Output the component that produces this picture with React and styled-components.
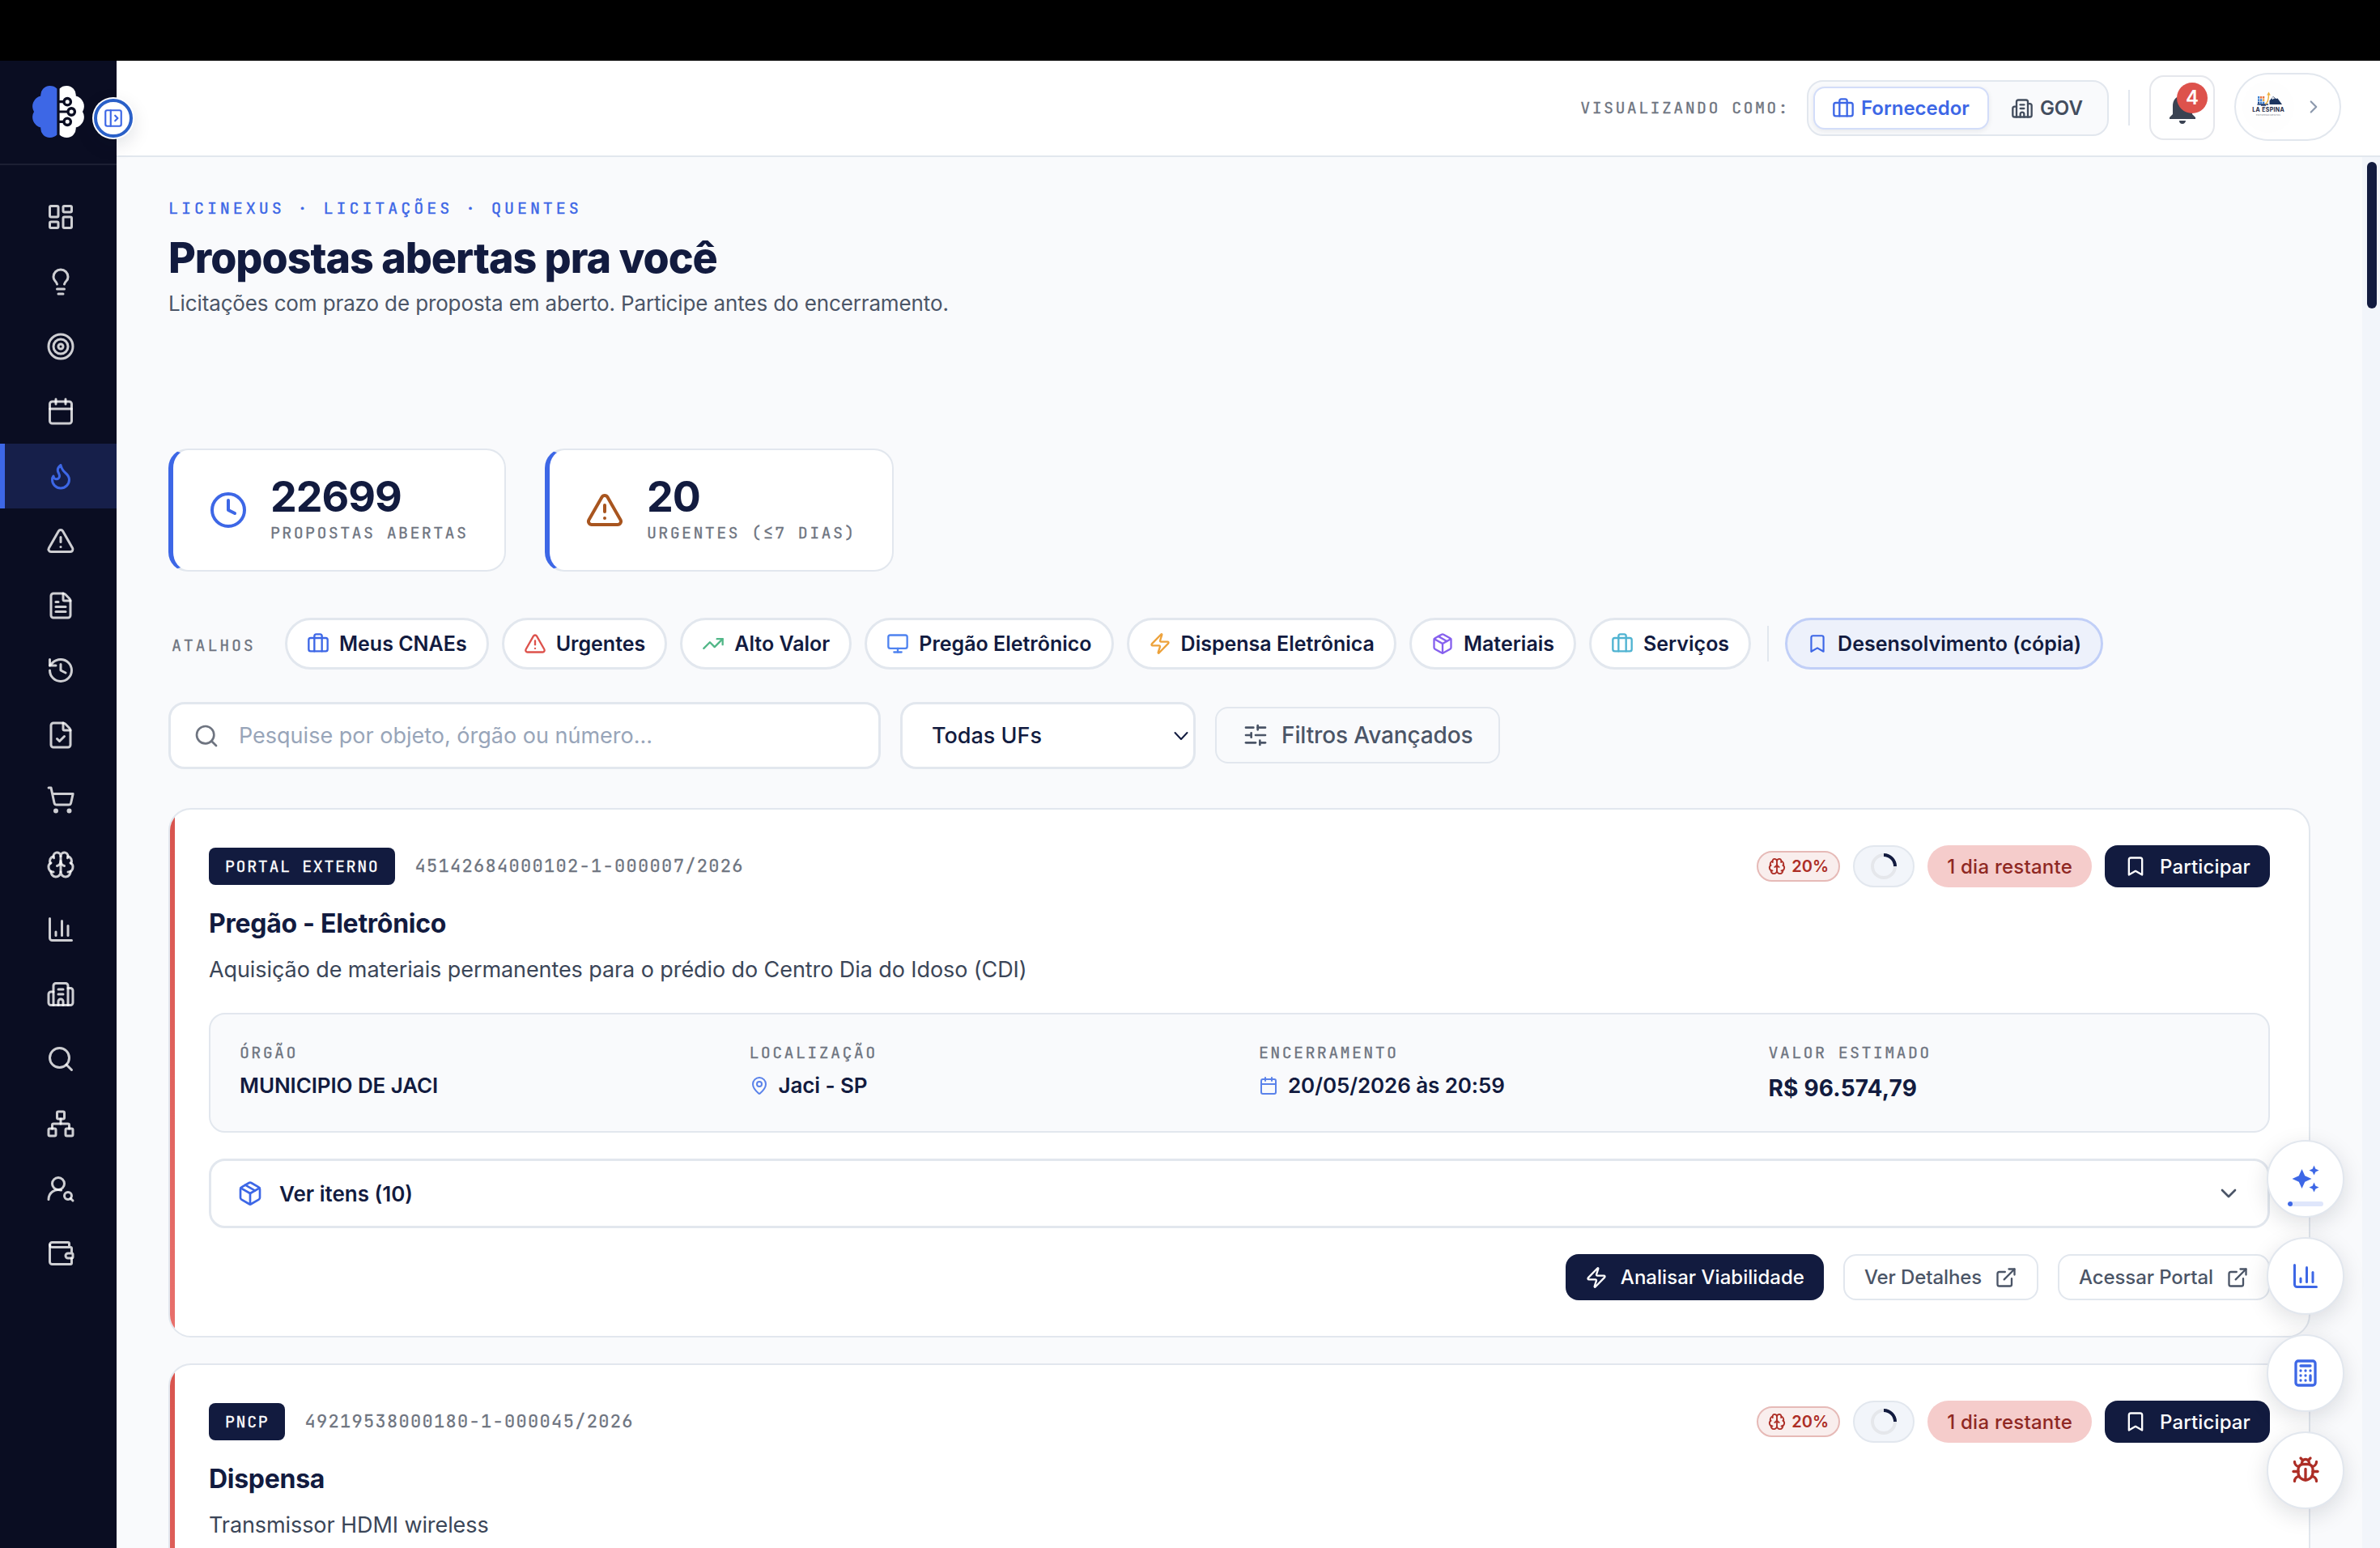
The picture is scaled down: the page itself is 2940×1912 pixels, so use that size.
import React from "react";
import styled, { createGlobalStyle, css } from "styled-components";
import {
  LayoutDashboard, Lightbulb, Target, Calendar, Flame, TriangleAlert, FileText, History, FileCheck,
  ShoppingCart, Brain, ChartColumn, Building2, Search, Network, UserRoundSearch, Wallet, PanelLeftOpen,
  Briefcase, ChevronRight, ChevronDown, Clock, TrendingUp, Monitor, Zap, Package, Bookmark,
  SlidersHorizontal, MapPin, ExternalLink, Calculator, Bug,
} from "lucide-react";
import { MdNotifications, MdAutoAwesome } from "react-icons/md";

const c = {
  night: "#0a0d22",
  navy: "#121b3f",
  blue: "#3d67e6",
  page: "#f9fafc",
  line: "#e2e7ee",
  gray: "#6e7480",
  slate: "#4b5567",
  red: "#dd524c",
  redDark: "#ad2e26",
};

const sans = `Inter, "Open Sans", sans-serif`;
const mono = `"JetBrains Mono", "DejaVu Sans Mono", monospace`;

const GlobalStyle = createGlobalStyle`
  * { box-sizing: border-box; }
  body { margin: 0; background: #000; overflow: hidden; }
  svg { display: block; flex: none; }
  button, input, select { font: inherit; margin: 0; }
  h1, h2, p { margin: 0; }
`;

const Screen = styled.div`
  width: 2940px;
  height: 1912px;
  padding-top: 75px;
  background: #000;
  display: flex;
  overflow: hidden;
  font-family: ${sans};
  color: ${c.navy};
  position: relative;
`;

/* Sidebar */
const Sidebar = styled.aside`
  width: 144px;
  flex: none;
  background: ${c.night};
  position: relative;
  z-index: 2;
`;
const Brand = styled.div`
  height: 129px;
  padding: 31px 0 0 40px;
  border-bottom: 2px solid #1c1f33;
`;
const Toggle = styled.button`
  position: absolute;
  left: 116px;
  top: 47px;
  width: 48px;
  height: 48px;
  padding: 0;
  border-radius: 50%;
  border: 4px solid #2a60c8;
  background: #fff;
  color: ${c.blue};
  box-shadow: 0 0 0 2px #fff, 0 8px 24px rgba(15, 23, 42, 0.14);
  display: flex;
  align-items: center;
  justify-content: center;
`;
const Nav = styled.nav`
  display: flex;
  flex-direction: column;
  padding-top: 24px;
`;
const NavItem = styled.a`
  height: 80px;
  display: flex;
  align-items: center;
  justify-content: center;
  border-left: 6px solid ${(p) => (p.$active ? c.blue : "transparent")};
  background: ${(p) => (p.$active ? "#161f4a" : "transparent")};
  color: ${(p) => (p.$active ? c.blue : "rgba(255,255,255,0.8)")};
`;

/* Right-hand column */
const Column = styled.div`
  flex: 1;
  min-width: 0;
  display: flex;
  flex-direction: column;
  background: ${c.page};
`;
const Header = styled.header`
  height: 119px;
  flex: none;
  background: #fff;
  border-bottom: 2px solid ${c.line};
  display: flex;
  align-items: center;
  justify-content: flex-end;
  padding: 0 48px 1px 0;
`;
const MonoLabel = styled.span`
  font-family: ${mono};
  font-size: 20px;
  line-height: 28px;
  letter-spacing: ${(p) => p.$track || "2.37px"};
  color: ${c.gray};
  -webkit-text-stroke: 0.3px;
  white-space: nowrap;
`;
const Segment = styled.div`
  display: flex;
  gap: 4px;
  width: 373px;
  height: 69px;
  margin: 1px 0 0 21px;
  padding: 6px;
  border: 2px solid ${c.line};
  border-radius: 20px;
  background: ${c.page};
`;
const SegmentButton = styled.button`
  height: 53px;
  display: flex;
  align-items: center;
  gap: 8px;
  padding: 0 22px 0 21px;
  border-radius: 14px;
  border: 2px solid ${(p) => (p.$active ? "#d3ddf9" : "transparent")};
  background: ${(p) => (p.$active ? "#fff" : "transparent")};
  box-shadow: ${(p) => (p.$active ? "0 2px 6px rgba(15,23,42,0.08)" : "none")};
  color: ${(p) => (p.$active ? c.blue : "#434d5e")};
  font-size: 24px;
  font-weight: 600;
`;
const Rule = styled.i`
  width: 2px;
  height: 44px;
  flex: none;
  background: ${c.line};
`;
const HeaderRule = styled(Rule)`
  margin-left: 24px;
`;
const BellButton = styled.button`
  position: relative;
  width: 81px;
  height: 80px;
  margin-left: 24px;
  padding: 0;
  border: 2px solid #e5e7ec;
  border-radius: 18px;
  background: #fff;
  color: #3a4252;
  display: flex;
  align-items: center;
  justify-content: center;
`;
const Count = styled.span`
  position: absolute;
  left: 32px;
  top: 7px;
  width: 38px;
  height: 38px;
  border-radius: 50%;
  background: ${c.red};
  color: #fff;
  font-size: 24px;
  font-weight: 600;
  line-height: 38px;
  text-align: center;
`;
const Profile = styled.button`
  width: 132px;
  height: 84px;
  margin: 0 0 2px 24px;
  padding: 0 19px 0 8px;
  border: 2px solid ${c.line};
  border-radius: 42px;
  background: #fff;
  color: #8c99ad;
  display: flex;
  align-items: center;
  justify-content: space-between;
`;
const Avatar = styled.span`
  width: 64px;
  height: 64px;
  border-radius: 50%;
  overflow: hidden;
  background: #fefefe;
`;

const Body = styled.div`
  flex: 1;
  min-height: 0;
  display: flex;
`;
const Main = styled.main`
  flex: 1;
  min-width: 0;
  padding: 47px 64px 0;
  overflow: hidden;
`;
const Track = styled.div`
  width: 22px;
  flex: none;
  padding: 6px 4px 0 6px;
  background: #f2f5fa;
`;
const Thumb = styled.div`
  height: 181px;
  border-radius: 6px;
  background: ${c.navy};
`;

const Eyebrow = styled.p`
  font-family: ${mono};
  font-size: 20px;
  line-height: 32px;
  letter-spacing: 3.96px;
  color: ${c.blue};
  -webkit-text-stroke: 0.4px;
`;
const Title = styled.h1`
  margin-top: 16px;
  font-size: 52px;
  line-height: 60px;
  font-weight: 800;
  letter-spacing: -1.04px;
`;
const Subtitle = styled.p`
  margin-top: 6px;
  font-size: 26px;
  line-height: 40px;
  letter-spacing: -0.125px;
  color: ${c.slate};
`;

const Stats = styled.div`
  display: flex;
  gap: 48px;
  margin-top: 159px;
`;
const Stat = styled.div`
  height: 152px;
  width: ${(p) => p.$width}px;
  display: flex;
  align-items: center;
  gap: 28px;
  padding-left: 44px;
  border: 2px solid ${c.line};
  border-left: 6px solid ${c.blue};
  border-radius: 24px;
  background: #fff;
  color: ${(p) => p.$tone};
`;
const StatText = styled.div`
  display: flex;
  flex-direction: column;
  gap: 4px;
`;
const StatValue = styled.strong`
  font-size: 52px;
  line-height: 52px;
  font-weight: 700;
  letter-spacing: -1.04px;
  color: ${c.navy};
`;

const Shortcuts = styled.div`
  display: flex;
  align-items: center;
  gap: 16px;
  margin-top: 57px;
`;
const ShortcutsLabel = styled(MonoLabel)`
  width: 128px;
  padding: 4px 0 0 4px;
`;
const Chip = styled.button`
  height: 64px;
  display: flex;
  align-items: center;
  gap: 12px;
  padding: 0 24px;
  border: 3px solid ${(p) => (p.$active ? "#c1cff7" : c.line)};
  border-radius: 32px;
  background: ${(p) => (p.$active ? "#edf1fb" : "#fff")};
  color: ${c.navy};
  font-size: 25px;
  font-weight: 600;
  white-space: nowrap;
`;
const ChipRule = styled(Rule)`
  margin: 0 4px;
`;

const Filters = styled.div`
  display: flex;
  align-items: center;
  gap: 24px;
  margin-top: 40px;
`;
const SearchBox = styled.label`
  width: 880px;
  height: 83px;
  display: flex;
  align-items: center;
  gap: 24px;
  padding: 0 28px;
  border: 3px solid ${c.line};
  border-radius: 20px;
  background: #fff;
  color: ${c.gray};
`;
const SearchInput = styled.input`
  flex: 1;
  border: 0;
  padding: 0;
  outline: 0;
  background: none;
  font-size: 27px;
  &::placeholder { color: #98a5b9; opacity: 1; }
`;
const UfSelect = styled.button`
  width: 365px;
  height: 83px;
  display: flex;
  align-items: center;
  justify-content: space-between;
  padding: 0 6px 0 36px;
  border: 3px solid ${c.line};
  border-radius: 20px;
  background: #fff;
  color: ${c.navy};
  font-size: 27px;
  font-weight: 500;
`;
const AdvancedButton = styled.button`
  height: 70px;
  margin-bottom: 1px;
  display: flex;
  align-items: center;
  gap: 16px;
  padding: 0 31px 0 32px;
  border: 2px solid ${c.line};
  border-radius: 16px;
  background: ${c.page};
  color: ${c.slate};
  font-size: 28px;
  font-weight: 500;
  letter-spacing: -0.12px;
`;

/* Tender cards */
const CardList = styled.div`
  display: flex;
  flex-direction: column;
  gap: 32px;
  margin-top: 48px;
`;
const Card = styled.article`
  position: relative;
  height: 654px;
  flex: none;
  padding: 44px 48px;
  border: 2px solid ${c.line};
  border-radius: 28px;
  background: #fff;
  overflow: hidden;
  &::before {
    content: "";
    position: absolute;
    left: 0;
    top: 0;
    bottom: 0;
    width: 6px;
    background: linear-gradient(#d8544e, #e8706c);
  }
`;
const CardTop = styled.div`
  height: 52px;
  display: flex;
  align-items: center;
`;
const Source = styled.span`
  height: 46px;
  padding: 0 20px;
  border-radius: 8px;
  background: ${c.navy};
  color: #fff;
  font-family: ${mono};
  font-size: 20px;
  line-height: 46px;
  letter-spacing: 1.6px;
  -webkit-text-stroke: 0.3px;
`;
const Code = styled.span`
  margin-left: 24px;
  font-family: ${mono};
  font-size: 22px;
  line-height: 46px;
  letter-spacing: 1.31px;
  color: ${c.gray};
  -webkit-text-stroke: 0.3px;
`;
const CardTags = styled.div`
  margin-left: auto;
  display: flex;
  align-items: center;
  gap: 16px;
`;
const Match = styled.span`
  width: 103px;
  height: 38px;
  display: flex;
  align-items: center;
  justify-content: center;
  gap: 7px;
  border: 2px solid #e6bab7;
  border-radius: 19px;
  background: #f9eeed;
  color: ${c.redDark};
  font-size: 20px;
  font-weight: 600;
`;
const Loading = styled.span`
  width: 76px;
  height: 52px;
  display: flex;
  align-items: center;
  justify-content: center;
  border: 2px solid ${c.line};
  border-radius: 26px;
  background: #f2f5fa;
`;
const Deadline = styled.span`
  height: 52px;
  padding: 0 24px;
  border-radius: 26px;
  background: #f5cccb;
  color: #8f2823;
  font-size: 24px;
  font-weight: 500;
  line-height: 53px;
  letter-spacing: 0.24px;
`;
const solid = css`
  border: 0;
  background: ${c.navy};
  color: #fff;
`;
const Join = styled.button`
  ${solid}
  height: 52px;
  display: flex;
  align-items: center;
  gap: 16px;
  padding: 0 24px;
  border-radius: 16px;
  font-size: 24px;
  font-weight: 500;
  letter-spacing: 0.12px;
`;
const CardTitle = styled.h2`
  margin-top: 23px;
  font-size: 32px;
  line-height: 44px;
  font-weight: 700;
  letter-spacing: -0.28px;
`;
const CardText = styled.p`
  margin-top: 13px;
  font-size: 27px;
  line-height: 44px;
  letter-spacing: -0.085px;
  color: #3b4658;
`;
const Facts = styled.div`
  display: grid;
  grid-template-columns: repeat(4, 1fr);
  column-gap: 48px;
  height: 148px;
  margin-top: 31px;
  padding: 33px 36px 0;
  border: 2px solid ${c.line};
  border-radius: 20px;
  background: ${c.page};
`;
const Fact = styled.div`
  display: flex;
  flex-direction: column;
  gap: 9px;
`;
const FactValue = styled.span`
  display: flex;
  align-items: center;
  gap: 12px;
  font-size: ${(p) => (p.$strong ? 28 : 26)}px;
  line-height: ${(p) => (p.$strong ? 42 : 36)}px;
  font-weight: ${(p) => (p.$strong ? 700 : 600)};
  letter-spacing: ${(p) => (p.$strong ? 0.18 : -0.1)}px;
  svg { color: #5a82ea; }
`;
const Items = styled.button`
  width: 100%;
  height: 86px;
  margin-top: 32px;
  display: flex;
  align-items: center;
  gap: 20px;
  padding: 0 32px;
  border: 3px solid ${c.line};
  border-radius: 20px;
  background: #fff;
  color: ${c.navy};
  font-size: 26px;
  font-weight: 600;
  svg:first-child { color: ${c.blue}; }
  svg:last-child { margin-left: auto; color: ${c.slate}; }
`;
const Actions = styled.div`
  display: flex;
  justify-content: flex-end;
  gap: 24px;
  margin-top: 32px;
`;
const Action = styled.button`
  height: 57px;
  display: flex;
  align-items: center;
  gap: 16px;
  padding: 0 24px;
  border: 2px solid ${c.line};
  border-radius: 16px;
  background: #fff;
  color: ${c.slate};
  font-size: 24px;
  font-weight: 500;
  letter-spacing: ${(p) => (p.$primary ? 0.03 : -0.1)}px;
  ${(p) => p.$primary && solid}
`;

/* Floating buttons */
const Floating = styled.div`
  position: absolute;
  right: 44px;
  bottom: 48px;
  z-index: 3;
  display: flex;
  flex-direction: column;
  gap: 24px;
`;
const Fab = styled.button`
  width: 96px;
  height: 96px;
  padding: ${(p) => (p.$metered ? "16px 0 0" : "0")};
  display: flex;
  flex-direction: column;
  align-items: center;
  justify-content: center;
  gap: 10px;
  border: 2px solid ${c.line};
  border-radius: 50%;
  background: #fff;
  color: ${(p) => p.$tone || c.blue};
  box-shadow: 0 8px 28px rgba(15, 23, 42, 0.13);
`;
const Meter = styled.span`
  width: 44px;
  height: 6px;
  border-radius: 3px;
  background: #dfe6fb;
  overflow: hidden;
  &::before {
    content: "";
    display: block;
    width: 6px;
    height: 6px;
    border-radius: 3px;
    background: ${c.blue};
  }
`;

const BrandMark = () => (
  <svg width="64" height="64" viewBox="0 0 64 64">
    <path fill="#3d67e6" d="M30.4 3.4Q27 0 21.5 0A11.4 11.4 0 0 0 10.3 12.6A13 13 0 0 0 2 32A13 13 0 0 0 10.3 51.4A11.4 11.4 0 0 0 21.5 64Q27 64 30.4 60.6Z" />
    <path fill="#fff" d="M33.6 3.4Q37 0 42.5 0A11.4 11.4 0 0 1 53.7 12.6A13 13 0 0 1 62 32A13 13 0 0 1 53.7 51.4A11.4 11.4 0 0 1 42.5 64Q37 64 33.6 60.6Z" />
    <path stroke="#0a0d22" strokeWidth="3.2" d="M32 19.7H41M32 32H46M32 44.3H41" />
    <g fill="#fff" stroke="#0a0d22" strokeWidth="3.4">
      <circle cx="43.2" cy="19.7" r="4.2" />
      <circle cx="48.2" cy="32" r="4.2" />
      <circle cx="43.2" cy="44.3" r="4.2" />
    </g>
  </svg>
);

const CompanyLogo = () => (
  <svg width="64" height="64" viewBox="0 0 64 64">
    <g fill="#3b7fd0">
      <rect x="19" y="19" width="2.3" height="2.6" />
      <rect x="22" y="19" width="2.3" height="2.6" fill="#e8743c" />
      <rect x="25" y="19" width="2.3" height="2.6" fill="#e8743c" />
      <rect x="19" y="22.3" width="2.3" height="2.6" />
      <rect x="22" y="22.3" width="2.3" height="2.6" />
      <rect x="25" y="22.3" width="2.3" height="2.6" fill="#f0a63a" />
      <rect x="19" y="25.6" width="2.3" height="2.6" fill="#1f4e96" />
      <rect x="22" y="25.6" width="2.3" height="2.6" />
      <rect x="25" y="25.6" width="2.3" height="2.6" />
    </g>
    <path d="M18.5 29H32M23 30H29" stroke="#1c3a6e" strokeWidth="1.4" />
    <path d="M28 28.5C31 27.5 32.5 24 32.5 16.5" stroke="#eeb13f" strokeWidth="1.5" fill="none" />
    <path d="M30.2 17.5L32.5 13.6L34.8 17.5Z" fill="#eeb13f" />
    <path d="M33.5 29V24.5L38 19L41.5 22L43.5 21.5L49 29Z" fill="#1c3560" />
    <path d="M36.3 21.6L38 19.5L40.2 22L38.6 21.8L37.6 23Z" fill="#fff" />
    <text x="32" y="38" textAnchor="middle" fontFamily="Inter, sans-serif" fontWeight="700" fontSize="7" textLength="39.5" fill="#1b2744">LA ESPINA</text>
    <text x="32" y="42.8" textAnchor="middle" fontFamily="Inter, sans-serif" fontSize="2.6" textLength="30" fill="#7a7f8a">EMPREENDIMENTOS</text>
  </svg>
);

const Spinner = () => (
  <svg width="32" height="32" viewBox="0 0 32 32" fill="none" strokeWidth="4">
    <circle cx="16" cy="16" r="14" stroke="#e5e7eb" />
    <path d="M16 2A14 14 0 0 1 30 16" stroke={c.navy} />
  </svg>
);

const SelectArrow = () => (
  <svg width="18" height="12" viewBox="0 0 18 12" fill="none" stroke="currentColor" strokeWidth="2" strokeLinecap="round" strokeLinejoin="round">
    <path d="M1.5 2L9 10L16.5 2" />
  </svg>
);

const navIcons = [
  LayoutDashboard, Lightbulb, Target, Calendar, Flame, TriangleAlert, FileText, History, FileCheck,
  ShoppingCart, Brain, ChartColumn, Building2, Search, Network, UserRoundSearch, Wallet,
];

const chips = [
  { icon: Briefcase, tone: "#3d67e6", text: "Meus CNAEs" },
  { icon: TriangleAlert, tone: "#dd524c", text: "Urgentes" },
  { icon: TrendingUp, tone: "#52b788", text: "Alto Valor" },
  { icon: Monitor, tone: "#4f83f0", text: "Pregão Eletrônico" },
  { icon: Zap, tone: "#eda23b", text: "Dispensa Eletrônica" },
  { icon: Package, tone: "#8660ee", text: "Materiais" },
  { icon: Briefcase, tone: "#4fb3d1", text: "Serviços" },
];

const TenderCard = ({ source, code, title, text, children }) => (
  <Card>
    <CardTop>
      <Source>{source}</Source>
      <Code>{code}</Code>
      <CardTags>
        <Match><Brain size={22} />20%</Match>
        <Loading><Spinner /></Loading>
        <Deadline>1 dia restante</Deadline>
        <Join><Bookmark size={28} />Participar</Join>
      </CardTags>
    </CardTop>
    <CardTitle>{title}</CardTitle>
    <CardText>{text}</CardText>
    {children}
  </Card>
);

export default function App() {
  return (
    <Screen>
      <GlobalStyle />
      <Sidebar>
        <Brand><BrandMark /></Brand>
        <Nav>
          {navIcons.map((Icon, i) => (
            <NavItem key={i} $active={Icon === Flame}><Icon size={36} /></NavItem>
          ))}
        </Nav>
        <Toggle><PanelLeftOpen size={26} /></Toggle>
      </Sidebar>
      <Column>
        <Header>
          <MonoLabel>VISUALIZANDO COMO:</MonoLabel>
          <Segment>
            <SegmentButton $active><Briefcase size={28} />Fornecedor</SegmentButton>
            <SegmentButton><Building2 size={28} />GOV</SegmentButton>
          </Segment>
          <HeaderRule />
          <BellButton><MdNotifications size={48} /><Count>4</Count></BellButton>
          <Profile><Avatar><CompanyLogo /></Avatar><ChevronRight size={26} /></Profile>
        </Header>
        <Body>
          <Main>
            <Eyebrow>LICINEXUS · LICITAÇÕES · QUENTES</Eyebrow>
            <Title>Propostas abertas pra você</Title>
            <Subtitle>Licitações com prazo de proposta em aberto. Participe antes do encerramento.</Subtitle>
            <Stats>
              <Stat $width={417} $tone={c.blue}>
                <Clock size={48} />
                <StatText><StatValue>22699</StatValue><MonoLabel>PROPOSTAS ABERTAS</MonoLabel></StatText>
              </Stat>
              <Stat $width={431} $tone="#a8551f">
                <TriangleAlert size={48} />
                <StatText><StatValue>20</StatValue><MonoLabel>URGENTES (≤7 DIAS)</MonoLabel></StatText>
              </Stat>
            </Stats>
            <Shortcuts>
              <ShortcutsLabel $track="2.8px">ATALHOS</ShortcutsLabel>
              {chips.map(({ icon: Icon, tone, text }) => (
                <Chip key={text}><Icon size={28} color={tone} />{text}</Chip>
              ))}
              <ChipRule />
              <Chip $active><Bookmark size={26} color={c.blue} />Desensolvimento (cópia)</Chip>
            </Shortcuts>
            <Filters>
              <SearchBox><Search size={32} /><SearchInput placeholder="Pesquise por objeto, órgão ou número..." /></SearchBox>
              <UfSelect>Todas UFs<SelectArrow /></UfSelect>
              <AdvancedButton><SlidersHorizontal size={32} />Filtros Avançados</AdvancedButton>
            </Filters>
            <CardList>
              <TenderCard
                source="PORTAL EXTERNO"
                code="45142684000102-1-000007/2026"
                title="Pregão - Eletrônico"
                text="Aquisição de materiais permanentes para o prédio do Centro Dia do Idoso (CDI)"
              >
                <Facts>
                  <Fact><MonoLabel>ÓRGÃO</MonoLabel><FactValue>MUNICIPIO DE JACI</FactValue></Fact>
                  <Fact><MonoLabel>LOCALIZAÇÃO</MonoLabel><FactValue><MapPin size={24} />Jaci - SP</FactValue></Fact>
                  <Fact><MonoLabel>ENCERRAMENTO</MonoLabel><FactValue><Calendar size={24} />20/05/2026 às 20:59</FactValue></Fact>
                  <Fact><MonoLabel>VALOR ESTIMADO</MonoLabel><FactValue $strong>R$ 96.574,79</FactValue></Fact>
                </Facts>
                <Items><Package size={32} />Ver itens (10)<ChevronDown size={32} /></Items>
                <Actions>
                  <Action $primary><Zap size={28} />Analisar Viabilidade</Action>
                  <Action>Ver Detalhes<ExternalLink size={28} /></Action>
                  <Action>Acessar Portal<ExternalLink size={28} /></Action>
                </Actions>
              </TenderCard>
              <TenderCard
                source="PNCP"
                code="49219538000180-1-000045/2026"
                title="Dispensa"
                text="Transmissor HDMI wireless"
              />
            </CardList>
          </Main>
          <Track><Thumb /></Track>
        </Body>
      </Column>
      <Floating>
        <Fab $metered><MdAutoAwesome size={36} /><Meter /></Fab>
        <Fab><ChartColumn size={36} /></Fab>
        <Fab><Calculator size={36} strokeWidth={2.2} /></Fab>
        <Fab $tone={c.redDark}><Bug size={36} strokeWidth={2.2} /></Fab>
      </Floating>
    </Screen>
  );
}
